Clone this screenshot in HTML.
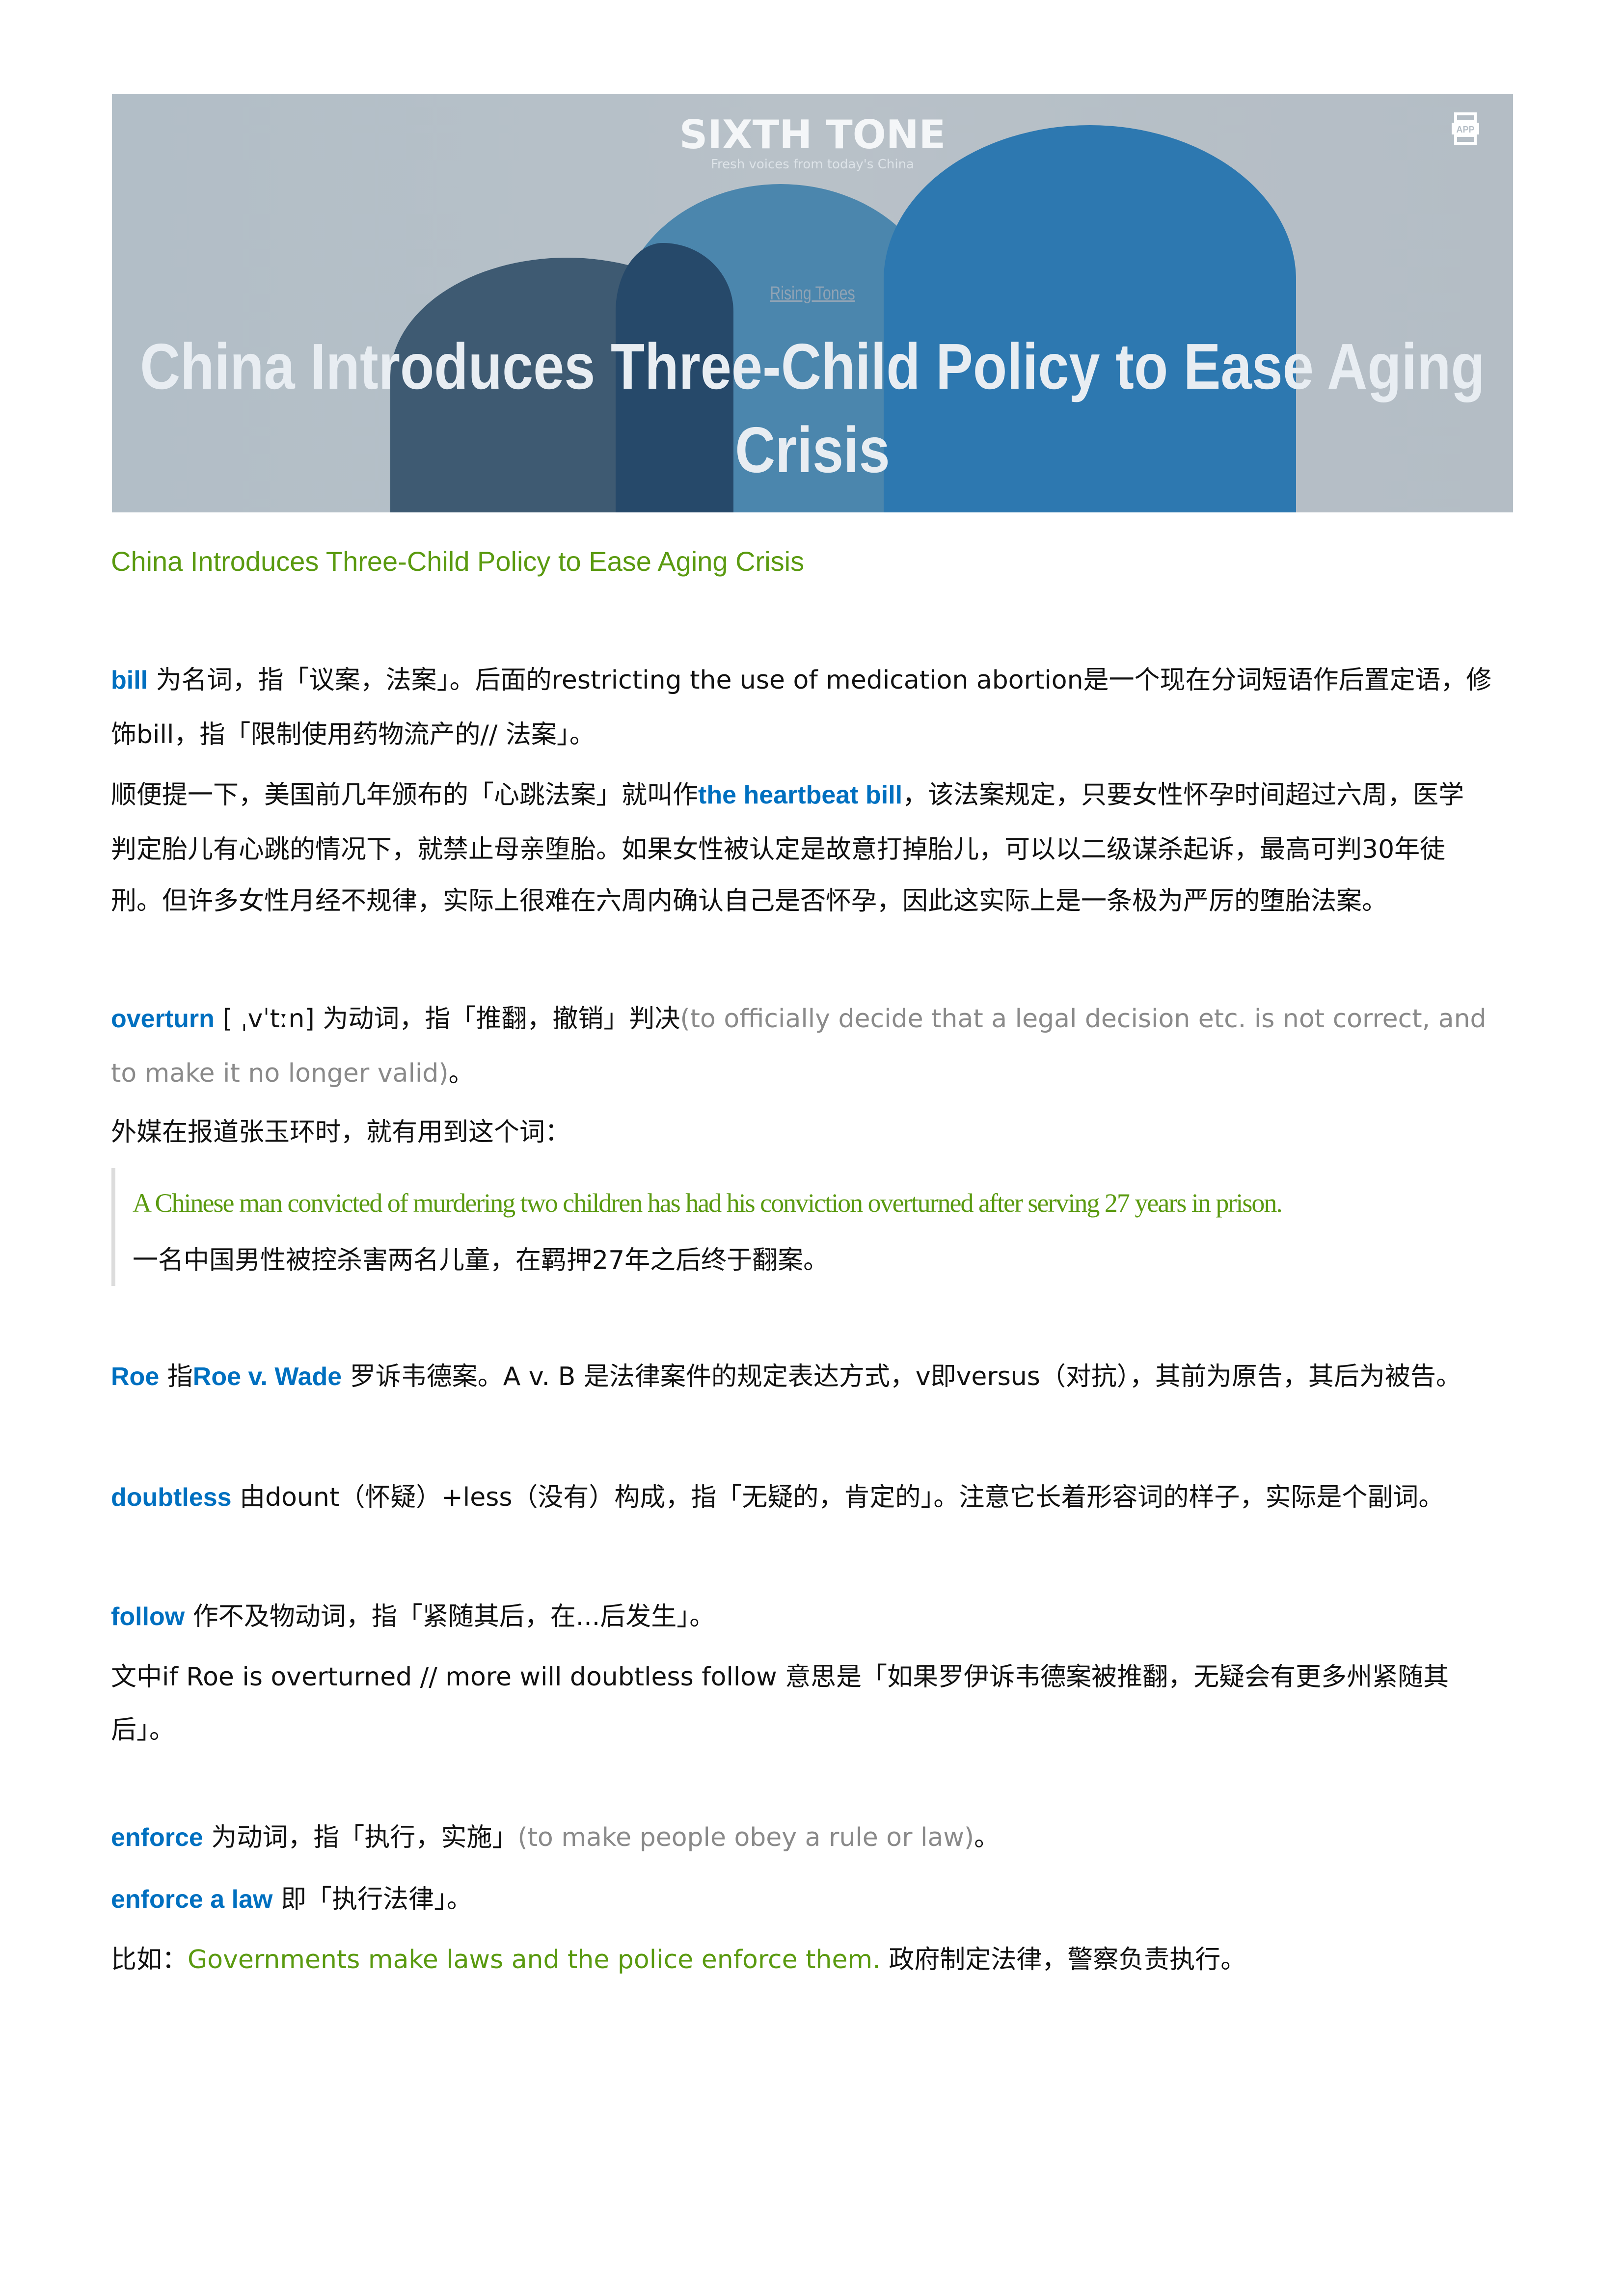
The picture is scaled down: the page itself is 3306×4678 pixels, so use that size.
<!DOCTYPE html>
<html><head><meta charset="utf-8">
<style>
html,body{margin:0;padding:0;background:#fff;}
body{width:3306px;height:4678px;position:relative;overflow:hidden;font-family:"DejaVu Sans","Noto Sans CJK SC",sans-serif;color:#111;}
.l{position:absolute;left:226px;white-space:nowrap;font-size:52px;line-height:111px;height:111px;}
.b{color:#0070c0;font-weight:bold;font-family:"Liberation Sans","Noto Sans CJK SC",sans-serif;}
.g{color:#5a9a10;}
.gr{color:#8a8a8a;}
#ban{position:absolute;left:228px;top:192px;width:2854px;height:852px;overflow:hidden;background:linear-gradient(90deg,#b2bec7,#b8c1c8 50%,#b4bdc5);}
.h{position:absolute;border-radius:50% 50% 0 0/35% 35% 0 0;}
.t{position:absolute;left:-573px;width:4000px;text-align:center;white-space:nowrap;color:#e8edf2;font-size:132px;line-height:170px;font-weight:bold;font-family:'Liberation Sans',sans-serif;transform:scaleX(0.86);transform-origin:50% 50%;}
</style></head><body>
<div id="ban">
  <div class="h" style="left:567px;top:333px;width:720px;height:700px;background:#3e5a72;"></div>
  <div class="h" style="left:1032px;top:183px;width:660px;height:800px;background:#4b86ad;"></div>
  <div class="h" style="left:1026px;top:303px;width:240px;height:700px;background:#26496a;border-radius:40% 60% 0 0/20% 20% 0 0;"></div>
  <div class="h" style="left:1572px;top:63px;width:840px;height:900px;background:#2d78b0;"></div>
  <div style="position:absolute;left:0;width:2854px;top:36px;text-align:center;color:#f4f6f8;font-size:80px;font-weight:bold;font-family:'DejaVu Sans','Liberation Sans',sans-serif;">SIXTH TONE</div>
  <div style="position:absolute;left:0;width:2854px;top:128px;text-align:center;color:#dde3e8;font-size:26px;">Fresh voices from today's China</div>
  <div style="position:absolute;left:0;width:2854px;top:385px;text-align:center;color:#8fa3b5;font-size:38px;text-decoration:underline;font-family:'Liberation Sans',sans-serif;transform:scaleX(0.8);">Rising Tones</div>
  <div class="t" style="top:470px;">China Introduces Three-Child Policy to Ease Aging</div>
  <div class="t" style="top:640px;">Crisis</div>
  <svg style="position:absolute;left:2727px;top:36px" width="60" height="70" viewBox="0 0 60 70"><rect x="10" y="4" width="40" height="16" fill="none" stroke="#fff" stroke-width="6"/><rect x="2" y="22" width="56" height="24" fill="#fff"/><text x="30" y="42" font-size="18" text-anchor="middle" fill="#b5bec6" font-family="Liberation Sans" font-weight="bold">APP</text><rect x="10" y="48" width="40" height="16" fill="none" stroke="#fff" stroke-width="6"/></svg>
</div>
<div class="l g" style="top:1088px;font-size:56px;font-family:'Liberation Sans',sans-serif;">China Introduces Three-Child Policy to Ease Aging Crisis</div>

<div class="l" style="top:1331px"><span class="b">bill</span> 为名词，指「议案，法案」。后面的restricting the use of medication abortion是一个现在分词短语作后置定语，修</div>
<div class="l" style="top:1442px">饰bill，指「限制使用药物流产的// 法案」。</div>
<div class="l" style="top:1565px">顺便提一下，美国前几年颁布的「心跳法案」就叫作<span class="b">the heartbeat bill</span>，该法案规定，只要女性怀孕时间超过六周，医学</div>
<div class="l" style="top:1676px">判定胎儿有心跳的情况下，就禁止母亲堕胎。如果女性被认定是故意打掉胎儿，可以以二级谋杀起诉，最高可判30年徒</div>
<div class="l" style="top:1781px">刑。但许多女性月经不规律，实际上很难在六周内确认自己是否怀孕，因此这实际上是一条极为严厉的堕胎法案。</div>

<div class="l" style="top:2021px"><span class="b">overturn</span> [ ˌvˈtːn] 为动词，指「推翻，撤销」判决<span class="gr">(to officially decide that a legal decision etc. is not correct, and</span></div>
<div class="l" style="top:2132px"><span class="gr">to make it no longer valid)</span>。</div>
<div class="l" style="top:2252px">外媒在报道张玉环时，就有用到这个词：</div>
<div style="position:absolute;left:227px;top:2380px;width:8px;height:240px;background:#dcdcdc;"></div>
<div class="l g" style="left:270px;top:2396px;font-family:'Liberation Serif',serif;font-size:54px;letter-spacing:-2px;">A Chinese man convicted of murdering two children has had his conviction overturned after serving 27 years in prison.</div>
<div class="l" style="left:270px;top:2513px">一名中国男性被控杀害两名儿童，在羁押27年之后终于翻案。</div>

<div class="l" style="top:2750px"><span class="b">Roe</span> 指<span class="b">Roe v. Wade</span> 罗诉韦德案。A v. B 是法律案件的规定表达方式，v即versus（对抗），其前为原告，其后为被告。</div>
<div class="l" style="top:2996px"><span class="b">doubtless</span> 由dount（怀疑）+less（没有）构成，指「无疑的，肯定的」。注意它长着形容词的样子，实际是个副词。</div>
<div class="l" style="top:3239px"><span class="b">follow</span> 作不及物动词，指「紧随其后，在...后发生」。</div>
<div class="l" style="top:3362px">文中if Roe is overturned // more will doubtless follow 意思是「如果罗伊诉韦德案被推翻，无疑会有更多州紧随其</div>
<div class="l" style="top:3470px">后」。</div>
<div class="l" style="top:3689px"><span class="b">enforce</span> 为动词，指「执行，实施」<span class="gr">(to make people obey a rule or law)</span>。</div>
<div class="l" style="top:3815px"><span class="b">enforce a law</span> 即「执行法律」。</div>
<div class="l" style="top:3938px">比如：<span class="g">Governments make laws and the police enforce them.</span> 政府制定法律，警察负责执行。</div>
</body></html>
